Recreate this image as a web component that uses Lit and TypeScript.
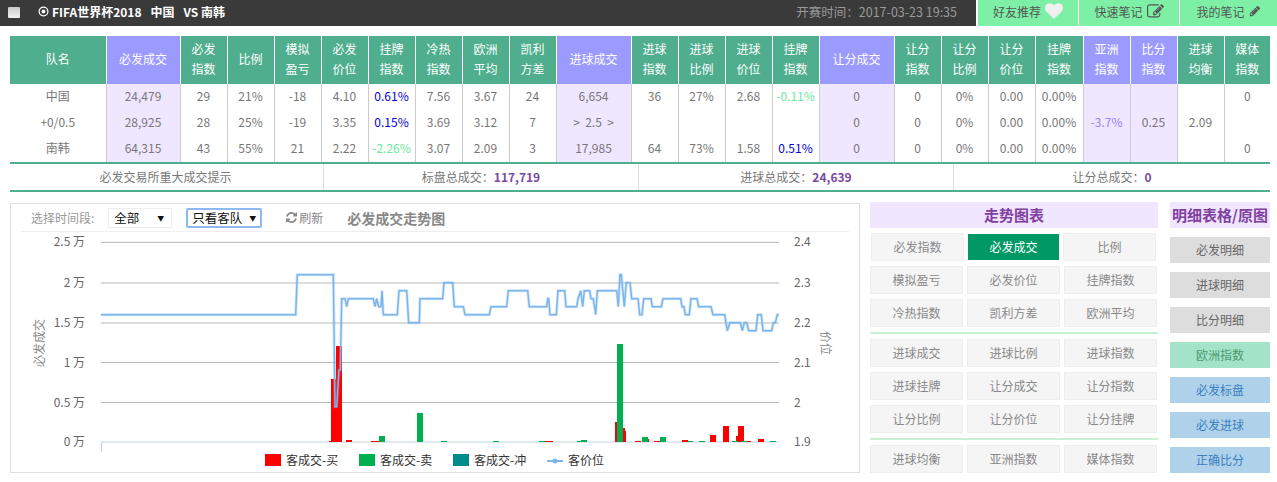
import { LitElement, html, css, svg } from "lit";
import { customElement } from "lit/decorators.js";

const COL_WIDTHS = [96, 74, 47, 47, 47, 47, 47, 47, 47, 47, 75, 47, 47, 47, 47, 75, 47, 47, 47, 48, 47, 47, 47, 46];

const HEADERS: [string, boolean][] = [
  ["队名", false], ["必发成交", true], ["必发<br>指数", false], ["比例", false], ["模拟<br>盈亏", false],
  ["必发<br>价位", false], ["挂牌<br>指数", false], ["冷热<br>指数", false], ["欧洲<br>平均", false], ["凯利<br>方差", false],
  ["进球成交", true], ["进球<br>指数", false], ["进球<br>比例", false], ["进球<br>价位", false], ["挂牌<br>指数", false],
  ["让分成交", true], ["让分<br>指数", false], ["让分<br>比例", false], ["让分<br>价位", false], ["挂牌<br>指数", false],
  ["亚洲<br>指数", true], ["比分<br>指数", true], ["进球<br>均衡", false], ["媒体<br>指数", false]
];

const PURPLE_COLS = new Set([1, 10, 15, 20, 21]);

const ROWS = [
  ["中国", "24,479", "29", "21%", "-18", "4.10", "0.61%", "7.56", "3.67", "24", "6,654", "36", "27%", "2.68", "-0.11%", "0", "0", "0%", "0.00", "0.00%", "", "", "", "0"],
  ["+0/0.5", "28,925", "28", "25%", "-19", "3.35", "0.15%", "3.69", "3.12", "7", ">  2.5  >", "", "", "", "", "0", "0", "0%", "0.00", "0.00%", "-3.7%", "0.25", "2.09", ""],
  ["南韩", "64,315", "43", "55%", "21", "2.22", "-2.26%", "3.07", "2.09", "3", "17,985", "64", "73%", "1.58", "0.51%", "0", "0", "0%", "0.00", "0.00%", "", "", "", "0"]
];

const TREND_GROUPS = [
  [["模拟盈亏", "必发价位", "挂牌指数"], ["冷热指数", "凯利方差", "欧洲平均"]],
  [["进球成交", "进球比例", "进球指数"], ["进球挂牌", "让分成交", "让分指数"], ["让分比例", "让分价位", "让分挂牌"]],
  [["进球均衡", "亚洲指数", "媒体指数"]]
];

const DETAIL_BUTTONS = [
  ["必发明细", "gray"], ["进球明细", "gray"], ["比分明细", "gray"], ["欧洲指数", "mint"],
  ["必发标盘", "blue"], ["必发进球", "blue"], ["正确比分", "blue"]
];

// chart geometry in page pixels, the svg viewBox starts at the panel corner
const GRID_Y = [242.3, 283, 323, 362.5, 402.5, 442];
const LEFT_LABELS = ["2.5 万", "2 万", "1.5 万", "1 万", "0.5 万", "0 万"];
const RIGHT_LABELS = ["2.4", "2.3", "2.2", "2.1", "2", "1.9"];

const LINE = [
  [101, 314.7], [295.7, 314.7], [297.3, 274.7], [333.3, 274.7], [335, 406.7], [336.7, 406.7], [339, 370], [340.3, 370],
  [341.7, 298.7], [345, 298.7], [346.7, 306.7], [348.3, 298.7], [373.3, 298.7], [375, 306.7], [376.7, 298.7], [378.7, 306.7],
  [381, 306.7], [382, 290.7], [383.3, 314.7], [397.3, 314.7], [399, 290.7], [406.7, 290.7], [408.7, 322.7], [419.3, 322.7],
  [420, 298.7], [442.7, 298.7], [444, 282.7], [452.7, 282.7], [454.3, 306.7], [463.3, 306.7], [465, 314.7], [489.3, 314.7],
  [491, 306.7], [506.7, 306.7], [508.3, 290.7], [527.7, 290.7], [529.3, 306.7], [546.7, 306.7], [547.7, 298.7], [548.7, 298.7],
  [550, 314.7], [556.3, 314.7], [558, 290.7], [564.7, 290.7], [566, 306.7], [576.7, 306.7], [578, 298.7], [580.7, 290.7],
  [582.7, 306.7], [584.3, 290.7], [589.7, 290.7], [591, 298.7], [593.3, 298.7], [595.7, 314.7], [597.3, 290.7], [616.7, 290.7],
  [618.3, 306.7], [620, 274.7], [621.3, 274.7], [624.3, 306.7], [626.3, 282.7], [630, 282.7], [631.7, 298.7], [638, 298.7],
  [639.7, 314.7], [642, 314.7], [643.7, 298.7], [651, 298.7], [652.3, 306.7], [661.3, 306.7], [663, 298.7], [680.7, 298.7],
  [682, 306.7], [684, 306.7], [685.3, 314.7], [689.3, 314.7], [691, 298.7], [697, 298.7], [698.7, 306.7], [711, 306.7],
  [713, 314.7], [724.7, 314.7], [727.3, 330.7], [730, 322.7], [740.3, 322.7], [742.3, 330.7], [744.3, 322.7], [746.7, 322.7],
  [748.7, 330.7], [756, 330.7], [757.7, 314.7], [761.3, 314.7], [763, 330.7], [771.7, 330.7], [773.3, 322.7], [775.3, 322.7],
  [777.3, 314.7], [779, 314.7]
];

// x0, x1, top
const RED_BARS = [
  [329, 331, 441], [331, 336, 379], [336, 342, 346], [346, 352, 440], [371, 379, 441], [545, 553, 441], [615, 617, 422],
  [623, 625, 428], [625, 626, 431], [635, 641, 441], [648, 649, 439], [654, 660, 441], [682, 688, 440], [710, 716, 435],
  [723, 729, 426], [736, 738, 436], [738, 744, 426], [747, 751, 441], [758, 764, 439]
];
const GREEN_BARS = [
  [379, 385, 436], [417, 423, 413], [441, 447, 441], [493, 499, 441], [539, 545, 441], [577, 581, 441], [581, 587, 440],
  [617, 623, 344], [642, 648, 437], [660, 666, 437], [688, 693, 441], [699, 705, 441], [732, 738, 441], [741, 747, 441], [770, 776, 441]
];

const LEGEND = [
  { x: 265, text: "客成交-买", color: "#ff0000" },
  { x: 359, text: "客成交-卖", color: "#00b050" },
  { x: 453, text: "客成交-冲", color: "#008b8b" }
];

const REFRESH = "M1511 928q0 5-1 7-64 268-268 434.5t-478 166.5q-146 0-282.5-55t-243.5-157l-129 129q-19 19-45 19t-45-19-19-45v-448q0-26 19-45t45-19h448q26 0 45 19t19 45-19 45l-137 137q71 66 161 102t187 36q134 0 250-65t186-179q11-17 53-117 8-23 30-23h192q13 0 22.5 9.5t9.5 22.5zm25-800v448q0 26-19 45t-45 19h-448q-26 0-45-19t-19-45 19-45l138-138q-148-137-349-137-134 0-250 65t-186 179q-11 17-53 117-8 23-30 23h-199q-13 0-22.5-9.5t-9.5-22.5v-7q65-268 270-434.5t480-166.5q146 0 284 55.5t245 156.5l130-129q19-19 45-19t45 19 19 45z";
const HEART = "M896 1664q-26 0-44-18l-624-602q-10-8-27.5-26t-55.5-65.5-68-97.5-53.5-121-23.5-138q0-220 127-344t351-124q62 0 126.5 21.5t120 58 95.5 68.5 76 68q36-36 76-68t95.5-68.5 120-58 126.5-21.5q224 0 351 124t127 344q0 221-229 450l-623 600q-18 18-44 18z";
const NOTE = "M888 1184l116-116-152-152-116 116v56h96v96h56zm440-720q-16-16-33 1l-350 350q-17 17-1 33t33-1l350-350q17-17 1-33zm80 594v190q0 119-84.5 203.5t-203.5 84.5h-832q-119 0-203.5-84.5t-84.5-203.5v-832q0-119 84.5-203.5t203.5-84.5h832q63 0 117 25 15 7 18 23 3 17-9 29l-49 49q-14 14-32 8-23-6-45-6h-832q-66 0-113 47t-47 113v832q0 66 47 113t113 47h832q66 0 113-47t47-113v-126q0-13 9-22l64-64q15-15 35-7t20 29zm-96-738l288 288-672 672h-288v-288zm444 132l-92 92-288-288 92-92q28-28 68-28t68 28l152 152q28 28 28 68t-28 68z";
const PENCIL = "M491 1536l91-91-235-235-91 91v107h128v128h107zm523-928q0-22-22-22-10 0-17 7l-542 542q-7 7-7 17 0 22 22 22 10 0 17-7l542-542q7-7 7-17zm-54-192l416 416-832 832h-416v-416zm683 96q0 53-37 90l-166 166-416-416 166-165q36-38 90-38 53 0 91 38l235 234q37 39 37 91z";

@customElement("app-root")
export class AppRoot extends LitElement {
  static styles = css`
    :host {
      display: block;
      width: 1277px;
      height: 482px;
      overflow: hidden;
      background: #fff;
      font-family: "Noto Sans CJK SC", sans-serif;
      font-size: 12px;
      color: #777;
    }

    .topbar {
      display: flex;
      height: 26px;
      align-items: stretch;
    }

    .topbar-main {
      display: flex;
      align-items: center;
      width: 976px;
      margin-right: 2px;
      background: #3a3a3a;
      padding-left: 8px;
      box-sizing: border-box;
    }

    .checkbox {
      width: 12px;
      height: 11px;
      margin-right: 18px;
      margin-top: -2px;
      border-radius: 1px;
      background: linear-gradient(#c9c9c9, #f2f2f2);
    }

    .match {
      display: flex;
      align-items: center;
      gap: 9px;
      color: #fff;
      font-weight: 700;
      margin-top: -3px;
    }

    .match svg { margin-right: -6px; }

    .kickoff {
      margin-left: auto;
      margin-right: 19px;
      color: #999;
      font-size: 12.5px;
      margin-top: -3px;
    }

    .tab {
      display: flex;
      align-items: center;
      justify-content: center;
      gap: 4px;
      width: 100px;
      margin-right: 1px;
      background: #7df0a5;
      color: #555;
      padding-bottom: 4px;
      box-sizing: border-box;
    }

    .tab:last-child { width: 97px; margin-right: 0; }

    .tab svg { fill: #555; }
    .tab svg.heart { fill: #f0f0f0; }

    .board {
      margin: 10px 7px 0 10px;
    }

    table {
      border-collapse: collapse;
      table-layout: fixed;
      width: 1260px;
    }

    th {
      height: 46px;
      padding: 0 0 2px;
      background: #4fae8e;
      color: #fff;
      font-weight: 400;
      line-height: 20px;
      border-left: 1px solid #fff;
    }

    th:first-child { border-left: none; }
    th.purple { background: #9b9bff; }

    td {
      height: 23px;
      padding: 0 0 3px;
      text-align: center;
      border-left: 1px solid #ccc;
      white-space: pre;
    }

    td:first-child { border-left: none; }
    td.purple { background: #efe6ff; }
    .pos { color: #0000e0; }
    .neg { color: #6ce8a0; }
    .asia { color: #9b7fff; }

    .summary {
      display: grid;
      grid-template-columns: 313px 315px 315px 317px;
      height: 26px;
      border-top: 2px solid #4fae8e;
      border-bottom: 2px solid #4fae8e;
    }

    .summary > div {
      display: flex;
      align-items: center;
      justify-content: center;
      padding-bottom: 2px;
      border-left: 1px solid #ddd;
    }

    .summary > div:first-child { border-left: none; padding-right: 2px; }
    .summary b { color: #7a4aa0; }

    .main {
      display: flex;
      gap: 10px;
      margin: 10px 7px 0 10px;
    }

    .chart {
      width: 850px;
      height: 270px;
      margin-top: 1px;
      box-sizing: border-box;
      border: 1px solid #e0e0e0;
    }

    .toolbar {
      display: flex;
      align-items: center;
      height: 28px;
      margin: 0 10px;
      padding-left: 10px;
      box-sizing: border-box;
      border-bottom: 1px solid #eee;
      color: #999;
    }

    .select {
      display: flex;
      align-items: center;
      justify-content: space-between;
      height: 20px;
      box-sizing: border-box;
      border: 1px solid #eee;
      color: #111;
      font-size: 12.5px;
      padding: 0 7px 0 5px;
    }

    .select.all { width: 64px; margin: 0 14px 0 14px; }

    .select.away {
      width: 76px;
      border: 2px solid #8db8f0;
      border-radius: 2px;
      padding: 0 4px 0 4px;
    }

    .arrow { font-size: 7px; }

    .refresh {
      display: flex;
      align-items: center;
      gap: 2px;
      margin-left: 24px;
      color: #888;
    }

    .refresh svg { fill: #888; }

    .chart-title {
      margin-left: 24px;
      color: #888;
      font-size: 14px;
      font-weight: 700;
    }

    .chart svg.plot {
      display: block;
      width: 848px;
      height: 240px;
    }

    .plot text {
      font-family: "Noto Sans CJK SC", sans-serif;
      font-size: 12px;
      fill: #666;
    }

    .plot text.title { fill: #888; }
    .plot text.legend { fill: #333; }

    .trends {
      display: flex;
      flex-direction: column;
      gap: 5px;
      width: 288px;
    }

    .panel-head {
      display: flex;
      align-items: center;
      justify-content: center;
      height: 26px;
      padding-bottom: 2px;
      box-sizing: border-box;
      background: #f0e6ff;
      color: #8040a0;
      font-size: 15px;
      font-weight: 700;
      white-space: nowrap;
    }

    .btn-row {
      display: grid;
      grid-template-columns: 93px 93px 93px;
      gap: 4px;
    }

    .btn-row.first {
      grid-template-columns: 93px 91px 93px;
      padding-left: 1px;
    }

    .btn {
      display: flex;
      align-items: center;
      justify-content: center;
      height: 28px;
      padding-bottom: 2px;
      box-sizing: border-box;
      background: #f5f5f5;
      border: 1px solid #eee;
      color: #888;
    }

    .btn.active {
      height: 26px;
      margin: 1px 0;
      background: #009966;
      border: none;
      color: #fff;
    }

    .sep {
      height: 2px;
      background: #c8f0d4;
    }

    .details {
      display: flex;
      flex-direction: column;
      width: 100px;
      margin-left: 2px;
      gap: 9px;
    }

    .detail {
      display: flex;
      align-items: center;
      justify-content: center;
      height: 26px;
      padding-bottom: 2px;
      box-sizing: border-box;
    }

    .gray { background: #ddd; color: #666; }
    .mint { background: #a3e4c9; color: #4a9a70; }
    .blue { background: #afd2ea; color: #3a80c0; }
  `;

  renderTopbar() {
    return html`
      <div class="topbar">
        <div class="topbar-main">
          <div class="checkbox"></div>
          <div class="match">
            <svg width="11" height="11" viewBox="0 0 11 11">
              <circle cx="5.5" cy="5.5" r="4.4" fill="none" stroke="#fff" stroke-width="1.2"></circle>
              <circle cx="5.5" cy="5.5" r="2" fill="#fff"></circle>
            </svg>
            <span>FIFA世界杯2018</span><span>中国</span><span>VS 南韩</span>
          </div>
          <div class="kickoff">开赛时间：2017-03-23 19:35</div>
        </div>
        <div class="tab">好友推荐
          <svg class="heart" width="18" height="18" viewBox="0 0 1792 1792"><path d=${HEART}></path></svg>
        </div>
        <div class="tab">快速笔记
          <svg width="17" height="17" viewBox="0 0 1792 1792"><path d=${NOTE}></path></svg>
        </div>
        <div class="tab">我的笔记
          <svg width="12" height="12" viewBox="0 0 1792 1792"><path d=${PENCIL}></path></svg>
        </div>
      </div>
    `;
  }

  cellClass(row: number, col: number) {
    const names: string[] = [];
    if (PURPLE_COLS.has(col)) names.push("purple");
    const value = ROWS[row][col];
    if (col === 6 || col === 14) names.push(value.startsWith("-") ? "neg" : "pos");
    if (col === 20) names.push("asia");
    return names.join(" ");
  }

  renderTable() {
    return html`
      <table>
        <colgroup>
          ${COL_WIDTHS.map((width) => html`<col style="width:${width}px">`)}
        </colgroup>
        <thead>
          <tr>
            ${HEADERS.map(([label, purple]) => html`
              <th class=${purple ? "purple" : ""} .innerHTML=${label}></th>
            `)}
          </tr>
        </thead>
        <tbody>
          ${ROWS.map((row, r) => html`
            <tr>
              ${row.map((value, c) => html`<td class=${this.cellClass(r, c)}>${value}</td>`)}
            </tr>
          `)}
        </tbody>
      </table>
      <div class="summary">
        <div>必发交易所重大成交提示</div>
        <div>标盘总成交：<b>117,719</b></div>
        <div>进球总成交：<b>24,639</b></div>
        <div>让分总成交：<b>0</b></div>
      </div>
    `;
  }

  renderPlot() {
    const points = LINE.map(([x, y]) => `${x},${y}`).join(" ");
    return html`
      <svg class="plot" viewBox="11 232 848 240">
        ${GRID_Y.slice(0, 5).map((y) => svg`<line x1="101" x2="779" y1=${y} y2=${y} stroke="#b8b8b8"></line>`)}
        <line x1="101" x2="779" y1="442" y2="442" stroke="#c0d0e0"></line>
        <line x1="101.5" x2="101.5" y1="442" y2="452" stroke="#c0d0e0"></line>
        ${GRID_Y.map((y, i) => svg`
          <text x="85" y=${y + 4} text-anchor="end">${LEFT_LABELS[i]}</text>
          <text x="794" y=${y + 4}>${RIGHT_LABELS[i]}</text>
        `)}
        <text class="title" transform="translate(44 343) rotate(-90)" text-anchor="middle">必发成交</text>
        <text class="title" transform="translate(821 343) rotate(90)" text-anchor="middle">价位</text>
        ${RED_BARS.map(([x0, x1, top]) => svg`<rect x=${x0} y=${top} width=${x1 - x0} height=${442 - top} fill="#ff0000"></rect>`)}
        ${GREEN_BARS.map(([x0, x1, top]) => svg`<rect x=${x0} y=${top} width=${x1 - x0} height=${442 - top} fill="#00b050"></rect>`)}
        <polyline points=${points} fill="none" stroke="#7cb5ec" stroke-width="3.2" stroke-opacity="0.3"></polyline>
        <polyline points=${points} fill="none" stroke="#7cb5ec" stroke-width="1.5"></polyline>
        ${LEGEND.map((item) => svg`
          <rect x=${item.x} y="454" width="16" height="12" fill=${item.color}></rect>
          <text class="legend" x=${item.x + 21} y="465">${item.text}</text>
        `)}
        <line x1="547" x2="563" y1="461" y2="461" stroke="#7cb5ec" stroke-width="2"></line>
        <circle cx="555" cy="461" r="2.5" fill="#7cb5ec"></circle>
        <text class="legend" x="568" y="465">客价位</text>
      </svg>
    `;
  }

  renderChart() {
    return html`
      <div class="chart">
        <div class="toolbar">
          <span>选择时间段:</span>
          <div class="select all"><span>全部</span><span class="arrow">▼</span></div>
          <div class="select away"><span>只看客队</span><span class="arrow">▼</span></div>
          <div class="refresh">
            <svg width="11" height="11" viewBox="0 0 1536 1536"><path d=${REFRESH}></path></svg>
            <span>刷新</span>
          </div>
          <div class="chart-title">必发成交走势图</div>
        </div>
        ${this.renderPlot()}
      </div>
    `;
  }

  renderTrends() {
    return html`
      <div class="trends">
        <div class="panel-head">走势图表</div>
        <div class="btn-row first">
          <div class="btn">必发指数</div>
          <div class="btn active">必发成交</div>
          <div class="btn">比例</div>
        </div>
        ${TREND_GROUPS.map((group, i) => html`
          ${i > 0 ? html`<div class="sep"></div>` : ""}
          ${group.map((row) => html`
            <div class="btn-row">${row.map((label) => html`<div class="btn">${label}</div>`)}</div>
          `)}
        `)}
      </div>
    `;
  }

  render() {
    return html`
      ${this.renderTopbar()}
      <div class="board">${this.renderTable()}</div>
      <div class="main">
        ${this.renderChart()}
        ${this.renderTrends()}
        <div class="details">
          <div class="panel-head">明细表格/原图</div>
          ${DETAIL_BUTTONS.map(([label, tone]) => html`<div class="detail ${tone}">${label}</div>`)}
        </div>
      </div>
    `;
  }
}
